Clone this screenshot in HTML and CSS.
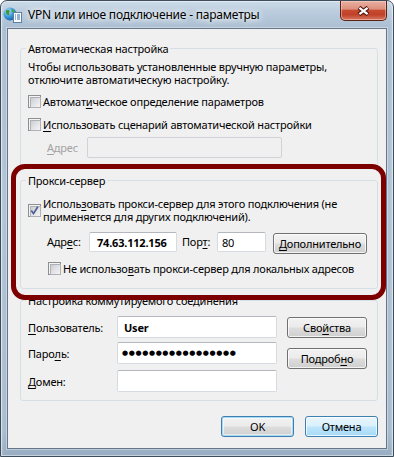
FILE: index.html
```html
<!DOCTYPE html>
<html lang="ru">
<head>
<meta charset="utf-8">
<title>VPN или иное подключение - параметры</title>
<link rel="stylesheet" href="styles.css">
</head>
<body>
<div class="window">
  <div class="titlebar">
    <svg class="app-icon" width="20" height="16" viewBox="0 0 20 16">
      <defs>
        <radialGradient id="globe" cx="0.35" cy="0.3" r="0.8">
          <stop offset="0" stop-color="#bfe8ff"/>
          <stop offset="0.5" stop-color="#3d9be0"/>
          <stop offset="1" stop-color="#14579e"/>
        </radialGradient>
      </defs>
      <circle cx="7" cy="7" r="6.5" fill="url(#globe)"/>
      <path d="M3 3.5c1.5-1 3-0.8 3.6 0.4 0.4 1-0.8 1.6-0.4 2.6 0.5 1.2-0.6 2.2-1.6 1.6C3.2 7.4 2.2 5.4 3 3.5z" fill="#3f9a3a"/>
      <path d="M8.5 2.2c1.6 0.2 3 1.2 3.6 2.8-1 0.2-1.6-0.4-2.4 0-0.8 0.3-1.6-0.6-1.2-1.6z" fill="#49a843"/>
      <rect x="10.5" y="5.5" width="8" height="10" fill="#fdfdfd" stroke="#5d7fa6"/>
      <path d="M12 8h1M14 8h3M12 10h1M14 10h3M12 12h1M14 12h3" stroke="#2f68b0"/>
    </svg>
    <div class="title">VPN или иное подключение - параметры</div>
    <div class="close">
      <svg width="13" height="10" viewBox="0 0 13 10">
        <path d="M2 1.5L11 8.5M11 1.5L2 8.5" stroke="#4a130a" stroke-width="4.2"/>
        <path d="M2.4 1.8L10.6 8.2M10.6 1.8L2.4 8.2" stroke="#ffffff" stroke-width="2.2"/>
      </svg>
    </div>
  </div>

  <div class="client">
    <fieldset class="group group-auto">
      <legend>Автоматическая настройка</legend>
      <p class="note">Чтобы использовать установленные вручную параметры,<br>отключите автоматическую настройку.</p>
      <div class="check-row row-autodetect">
        <span class="cb"></span>
        <span class="cb-label">Автомат<u>и</u>ческое определение параметров</span>
      </div>
      <div class="check-row row-script">
        <span class="cb"></span>
        <span class="cb-label"><u>И</u>спользовать сценарий автоматической настройки</span>
      </div>
      <div class="field-row row-script-addr">
        <span class="label disabled script-label"><u>А</u>дрес</span>
        <span class="edit disabled script-edit"></span>
      </div>
    </fieldset>

    <fieldset class="group group-proxy">
      <legend>Прокси-сервер</legend>
      <div class="check-row multi">
        <span class="cb checked">
          <svg class="tick" width="11" height="11" viewBox="0 0 11 11">
            <path d="M2.3 5.6L4.5 8.6L8.8 1.8" fill="none" stroke="#4b5e92" stroke-width="1.7"/>
          </svg>
        </span>
        <span class="cb-label">Исполь<u>з</u>овать прокси-сервер для этого подключения (не<br>применяется для других подключений).</span>
      </div>
      <div class="proxy-row">
        <span class="label proxy-addr-label">Адр<u>е</u>с:</span>
        <span class="edit proxy-addr"><b>74.63.112.156</b></span>
        <span class="label port-label">Пор<u>т</u>:</span>
        <span class="edit port">80</span>
        <span class="btn advanced"><u>Д</u>ополнительно</span>
      </div>
      <div class="check-row bypass">
        <span class="cb"></span>
        <span class="cb-label">Не использо<u>в</u>ать прокси-сервер для локальных адресов</span>
      </div>
    </fieldset>

    <fieldset class="group group-dialup">
      <legend>Настройка коммутируемого соединения</legend>
      <div class="dialup">
        <div class="cred">
          <div class="cred-row">
            <span class="label cred-label"><u>П</u>ользователь:</span>
            <span class="edit cred-edit user"><b>User</b></span>
          </div>
          <div class="cred-row row-pass">
            <span class="label cred-label">Паро<u>л</u>ь:</span>
            <span class="edit cred-edit pass"><span class="dots">●●●●●●●●●●●●●●●●●</span></span>
          </div>
          <div class="cred-row row-domain">
            <span class="label cred-label"><u>Д</u>омен:</span>
            <span class="edit cred-edit"></span>
          </div>
        </div>
        <div class="side">
          <span class="btn side-btn">Сво<u>й</u>ства</span>
          <span class="btn side-btn second">Подроб<u>н</u>о</span>
        </div>
      </div>
    </fieldset>

    <div class="actions">
      <span class="btn action default">OK</span>
      <span class="btn action hover">Отмена</span>
    </div>

    <div class="annotation"></div>
  </div>
</div>
</body>
</html>
```

FILE: styles.css
```css
* {
  box-sizing: border-box;
}

html,
body {
  margin: 0;
  padding: 0;
}

body {
  width: 394px;
  height: 457px;
  overflow: hidden;
  background: #ffffff;
  font-family: "Noto Sans", "Open Sans", sans-serif;
  font-size: 11px;
  line-height: 13px;
  letter-spacing: -0.2px;
  color: #000000;
}

u {
  text-decoration-thickness: 1px;
  text-underline-offset: 2px;
}

/* ---------- window frame ---------- */
.window {
  width: 394px;
  height: 457px;
  border: 1px solid #3e4d5c;
  border-radius: 7px 7px 0 0;
  padding: 0 6px 7px 6px;
  display: flex;
  flex-direction: column;
  background:
    linear-gradient(90deg, rgba(255, 255, 255, 0.25) 0, rgba(255, 255, 255, 0) 3px, rgba(255, 255, 255, 0) 389px, rgba(255, 255, 255, 0.25) 392px),
    linear-gradient(180deg, #cbdbe9 0px, #b9cbdc 12px, #abbfd2 27px, #b0c3d5 200px, #a8bccf 430px, #97acc1 457px);
  box-shadow: inset 0 0 0 1px rgba(255, 255, 255, 0.45);
}

.titlebar {
  height: 27px;
  margin: 0 -6px;
  padding-left: 2px;
  display: flex;
  align-items: flex-start;
  flex: none;
}

.app-icon {
  flex: none;
  margin-top: 6px;
}

.title {
  margin: 6px 0 0 5px;
  font-size: 12px;
  line-height: 16px;
  letter-spacing: -0.2px;
  color: #000000;
  white-space: nowrap;
  text-shadow: 0 0 5px rgba(255, 255, 255, 0.95), 0 0 9px rgba(255, 255, 255, 0.8), 0 0 14px rgba(255, 255, 255, 0.6);
}

.close {
  margin-left: auto;
  margin-right: 6px;
  width: 47px;
  height: 20px;
  flex: none;
  border: 1px solid #5e1f14;
  border-top: none;
  border-radius: 0 0 5px 5px;
  background: linear-gradient(180deg, #eab0a2 0%, #dd907e 42%, #c84a30 50%, #c0412a 72%, #d77a62 100%);
  box-shadow: inset 0 0 0 1px rgba(255, 220, 210, 0.45);
  display: flex;
  align-items: center;
  justify-content: center;
}

/* ---------- client area ---------- */
.client {
  position: relative;
  height: 421px;
  flex: none;
  border: 1px solid #65768a;
  background: #f0f0f0;
  padding: 0 8px 0 12px;
  box-shadow: 0 0 0 1px rgba(255, 255, 255, 0.35);
}

.group {
  margin: 0;
  min-width: 0;
  border: 1px solid #d5dfe5;
  border-radius: 3px;
  padding: 0 7px;
}

.group legend {
  padding: 0 2px;
  margin-left: -2px;
  line-height: 13px;
}

.group-auto {
  margin-top: 13px;
  padding-top: 5px;
  padding-bottom: 8px;
}

.group-proxy {
  margin-top: 7px;
  padding-top: 10px;
  padding-bottom: 13px;
}

.group-dialup {
  margin-top: 5px;
  padding-top: 9px;
  padding-bottom: 8px;
}

.note {
  margin: 0;
  white-space: nowrap;
}

/* ---------- checkboxes ---------- */
.check-row {
  display: flex;
  align-items: center;
  min-height: 13px;
}

.row-autodetect {
  margin-top: 9px;
}

.row-script {
  margin-top: 10px;
}

.multi .cb-label {
  white-space: nowrap;
}

.bypass {
  margin-top: 8px;
  margin-left: 20px;
}

.cb {
  position: relative;
  flex: none;
  width: 13px;
  height: 13px;
  border: 1px solid #8e8f8f;
  background: #f4f4f4;
  padding: 1px;
}

.cb::before {
  content: "";
  display: block;
  width: 9px;
  height: 9px;
  border: 1px solid #aeb2b7;
  background: linear-gradient(135deg, #c9cdd3 0%, #dfe1e4 45%, #f4f4f5 100%);
}

.tick {
  position: absolute;
  left: 0;
  top: 0;
}

.cb-label {
  margin-left: 2px;
  white-space: nowrap;
}

/* ---------- labels / edits ---------- */
.label {
  flex: none;
  white-space: nowrap;
}

.disabled {
  color: #a3a3a3;
}

.edit {
  flex: none;
  display: flex;
  align-items: center;
  background: #ffffff;
  border: 1px solid #d6dbe1;
  border-top-color: #b4b8be;
  border-radius: 2px;
  white-space: nowrap;
}

.edit.disabled {
  background: #f0f0f0;
  border-color: #cfd2d6;
}

.field-row {
  display: flex;
  align-items: center;
}

.row-script-addr {
  margin-top: 6px;
  height: 21px;
}

.script-label {
  margin-left: 19px;
  width: 40px;
}

.script-edit {
  width: 195px;
  height: 21px;
}

.proxy-row {
  margin-top: 9px;
  display: flex;
  align-items: flex-start;
  height: 22px;
}

.proxy-row .label {
  height: 20px;
  line-height: 20px;
}

.proxy-addr-label {
  margin-left: 19px;
  width: 42px;
}

.proxy-addr {
  width: 88px;
  height: 20px;
  padding-left: 7px;
}

.port-label {
  margin-left: 5px;
  width: 35px;
}

.port {
  width: 49px;
  height: 20px;
  padding-left: 4px;
}

.advanced {
  margin-left: 7px;
  margin-top: 1px;
  width: 94px;
}

/* ---------- dial-up ---------- */
.dialup {
  display: flex;
  align-items: flex-start;
}

.cred {
  display: flex;
  flex-direction: column;
}

.cred-row {
  display: flex;
  align-items: center;
  height: 22px;
}

.row-pass {
  margin-top: 4px;
}

.row-domain {
  margin-top: 6px;
}

.cred-label {
  width: 89px;
}

.cred-edit {
  width: 160px;
  height: 22px;
  padding-left: 6px;
}

.pass {
  padding-left: 4px;
}

.dots {
  font-family: "DejaVu Sans", sans-serif;
  font-size: 7px;
  letter-spacing: 0.62px;
  line-height: 10px;
}

.side {
  margin-left: 10px;
  display: flex;
  flex-direction: column;
}

.side-btn {
  width: 80px;
  margin-top: 1px;
}

.side-btn.second {
  margin-top: 10px;
}

/* ---------- buttons ---------- */
.btn {
  flex: none;
  height: 21px;
  display: flex;
  align-items: center;
  justify-content: center;
  border: 1px solid #707070;
  border-radius: 3px;
  background: linear-gradient(180deg, #f2f2f2 0%, #ebebeb 48%, #dddddd 52%, #cfcfcf 100%);
  box-shadow: inset 0 0 0 1px rgba(255, 255, 255, 0.75);
  white-space: nowrap;
}

.actions {
  margin-top: 15px;
  display: flex;
  justify-content: flex-end;
  gap: 11px;
}

.action {
  width: 73px;
}

.btn.default {
  border-color: #3c7fb1;
  box-shadow: inset 0 0 0 1px #a7dbf5, inset 0 0 0 2px rgba(255, 255, 255, 0.5);
}

.btn.hover {
  border-color: #3c7fb1;
  background: linear-gradient(180deg, #eaf6fd 0%, #d9f0fc 48%, #bee6fd 52%, #a7d9f5 100%);
}

/* ---------- red annotation overlay ---------- */
.annotation {
  position: absolute;
  left: 3px;
  top: 135px;
  width: 375px;
  height: 136px;
  border: 5px solid #7d0000;
  border-radius: 14px;
  pointer-events: none;
}
```
